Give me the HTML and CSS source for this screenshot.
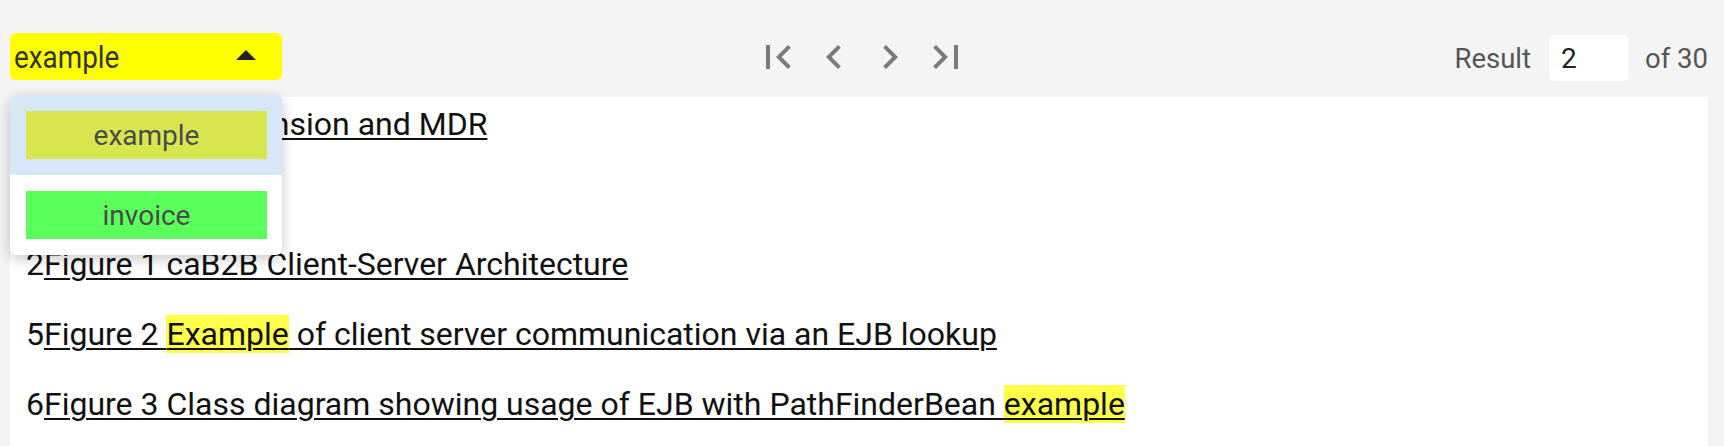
FILE: index.html
```html
<!DOCTYPE html>
<html lang="en">
<head>
<meta charset="utf-8">
<title>Search results</title>
<link rel="stylesheet" href="styles.css">
</head>
<body>
<div class="page">
  <header class="toolbar">
    <div class="select">
      <span class="select-value">example</span>
      <svg class="caret" viewBox="0 0 24 24" width="48" height="48"><path d="M7 14l5-5 5 5z"/></svg>
    </div>
    <nav class="pager">
      <svg class="pager-icon" viewBox="0 0 24 24" width="48" height="48"><path d="M18.41 16.59L13.82 12l4.59-4.59L17 6l-6 6 6 6zM6 6h2v12H6z"/></svg>
      <svg class="pager-icon" viewBox="0 0 24 24" width="48" height="48"><path d="M15.41 7.41L14 6l-6 6 6 6 1.41-1.41L10.83 12z"/></svg>
      <svg class="pager-icon" viewBox="0 0 24 24" width="48" height="48"><path d="M10 6L8.59 7.41 13.17 12l-4.58 4.59L10 18l6-6z"/></svg>
      <svg class="pager-icon" viewBox="0 0 24 24" width="48" height="48"><path d="M5.59 7.41L10.18 12l-4.59 4.59L7 18l6-6-6-6zM16 6h2v12h-2z"/></svg>
    </nav>
    <div class="result">
      <span class="result-label">Result</span>
      <div class="result-input">2</div>
      <span class="result-label">of 30</span>
    </div>
  </header>
  <main class="panel">
    <div class="row"><span class="page-no">1</span><a class="link">caB2B Grid Extension and MDR</a></div>
    <div class="row row-empty"></div>
    <div class="row"><span class="page-no">2</span><a class="link">Figure 1 caB2B Client-Server Architecture</a></div>
    <div class="row"><span class="page-no">5</span><a class="link">Figure 2 <mark class="hit">Example</mark> of client server communication via an EJB lookup</a></div>
    <div class="row"><span class="page-no">6</span><a class="link">Figure 3 Class diagram showing usage of EJB with PathFinderBean <mark class="hit">example</mark></a></div>
  </main>
  <ul class="menu">
    <li class="menu-item active"><span class="chip chip-example">example</span></li>
    <li class="menu-item"><span class="chip chip-invoice">invoice</span></li>
  </ul>
</div>
</body>
</html>
```

FILE: styles.css
```css
html, body {
  margin: 0;
  padding: 0;
  background: #f4f4f4;
  font-family: Roboto, "Noto Sans", sans-serif;
  color: #111;
}

.page {
  position: relative;
  padding: 33px 16px 0 10px;
  min-height: 446px;
  box-sizing: border-box;
}

.toolbar {
  display: grid;
  grid-template-columns: 1fr auto 1fr;
  align-items: start;
  height: 50px;
  margin-bottom: 14px;
}

.select {
  width: 272px;
  height: 47px;
  box-sizing: border-box;
  background: #ffff00;
  border-radius: 6px;
  display: flex;
  align-items: center;
  justify-content: space-between;
  padding: 0 12px 0 4px;
}

.select-value {
  font-size: 32px;
  color: #333;
  display: inline-block;
  transform: scaleX(0.87);
  transform-origin: left center;
}

.caret {
  fill: #222;
  margin-top: -2px;
}

.pager {
  display: flex;
  gap: 8px;
  margin-left: 6px;
  margin-top: 0;
}

.pager-icon {
  fill: #7a7a7a;
  display: block;
}

.result {
  justify-self: end;
  display: flex;
  align-items: center;
  margin-top: 2px;
}

.result-label {
  font-size: 27.5px;
  color: #555;
}

.result-input {
  width: 80px;
  height: 46px;
  box-sizing: border-box;
  background: #fff;
  border-radius: 6px;
  margin: 0 16px 0 18px;
  padding-left: 12px;
  font-size: 28px;
  color: #222;
  display: flex;
  align-items: center;
}

.panel {
  background: #fff;
  padding: 8px 16px 0;
  min-height: 349px;
  box-sizing: border-box;
}

.row {
  font-size: 32px;
  line-height: 38px;
  height: 38px;
  margin-bottom: 32px;
  white-space: nowrap;
}

.link {
  color: #111;
  text-decoration: underline;
  text-decoration-thickness: 2px;
  text-underline-offset: 3px;
}

.hit {
  background: #ffff4a;
  color: inherit;
}

.menu {
  position: absolute;
  top: 95px;
  left: 10px;
  width: 272px;
  margin: 0;
  padding: 0;
  list-style: none;
  background: #fff;
  border-radius: 6px;
  box-shadow: 0 4px 14px rgba(0, 0, 0, 0.22);
  overflow: hidden;
}

.menu-item {
  height: 80px;
  padding: 16px 15px 16px 16px;
  box-sizing: border-box;
  display: flex;
}

.menu-item.active {
  background: #d6e7f8;
}

.chip {
  flex: 1;
  display: flex;
  align-items: center;
  justify-content: center;
  font-size: 28px;
  color: #4a4a4a;
}

.chip-example {
  background: #d7e64e;
}

.chip-invoice {
  background: #5bff5b;
}
```
